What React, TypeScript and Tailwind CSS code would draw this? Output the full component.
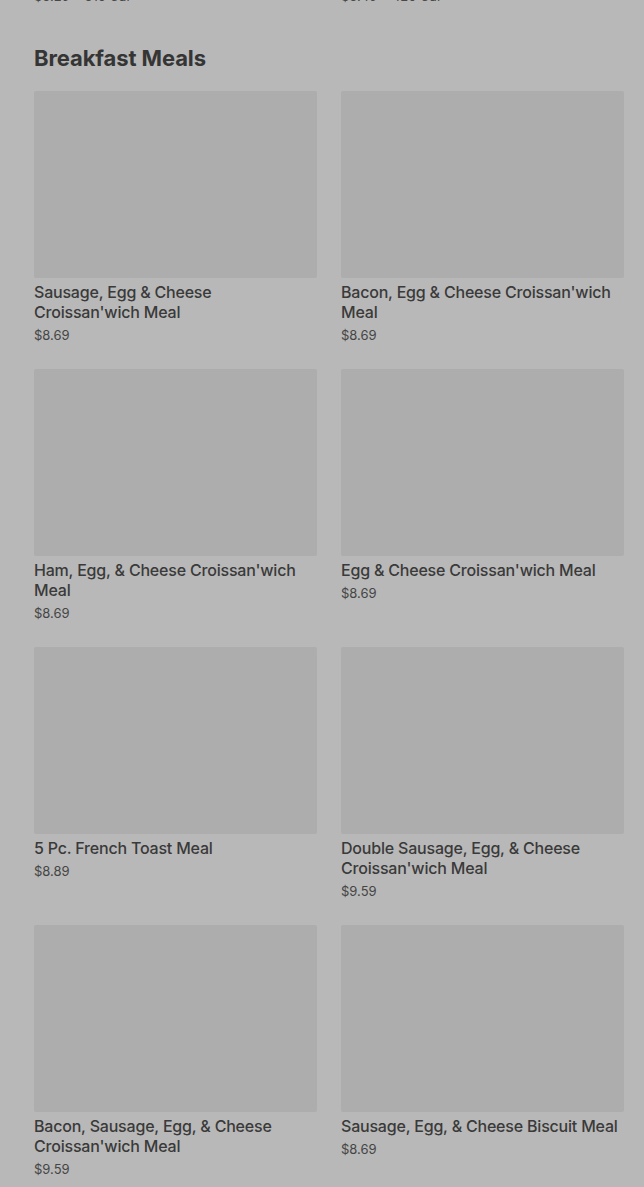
import React from "react";

const items = [
  { name: "Sausage, Egg & Cheese Croissan'wich Meal", price: "$8.69" },
  { name: "Bacon, Egg & Cheese Croissan'wich Meal", price: "$8.69" },
  { name: "Ham, Egg, & Cheese Croissan'wich Meal", price: "$8.69" },
  { name: "Egg & Cheese Croissan'wich Meal", price: "$8.69" },
  { name: "5 Pc. French Toast Meal", price: "$8.89" },
  { name: "Double Sausage, Egg, & Cheese Croissan'wich Meal", price: "$9.59" },
  { name: "Bacon, Sausage, Egg, & Cheese Croissan'wich Meal", price: "$9.59" },
  { name: "Sausage, Egg, & Cheese Biscuit Meal", price: "$8.69" },
];

export default function App() {
  return (
    <div
      className="w-[644px] h-[1187px] overflow-hidden bg-[#b8b8b8] pl-[34px] pr-[20px]"
      style={{ fontFamily: "Inter, 'Noto Sans', sans-serif" }}
    >
      <div className="grid grid-cols-2 gap-x-[24px] mt-[-13px] text-[13px] leading-[18px] text-[#484848]">
        <div>$3.29 • 310 Cal</div>
        <div>$3.49 • 420 Cal</div>
      </div>
      <h2 className="mt-[39px] text-[22px] leading-[28px] font-bold tracking-[-0.1px] text-[#353535]">
        Breakfast Meals
      </h2>
      <div className="mt-[19px] grid grid-cols-2 gap-x-[24px] gap-y-[25px]">
        {items.map((it) => (
          <div key={it.name} className="flex flex-col">
            <div className="h-[187px] bg-[#adadad] rounded-[2px]" />
            <div className="pt-[4px] text-[16px] leading-[20px] font-medium tracking-[-0.2px] text-[#3a3a3a]">
              {it.name}
            </div>
            <div className="mt-[4px] text-[13px] leading-[18px] text-[#454545]">
              {it.price}
            </div>
          </div>
        ))}
      </div>
    </div>
  );
}
